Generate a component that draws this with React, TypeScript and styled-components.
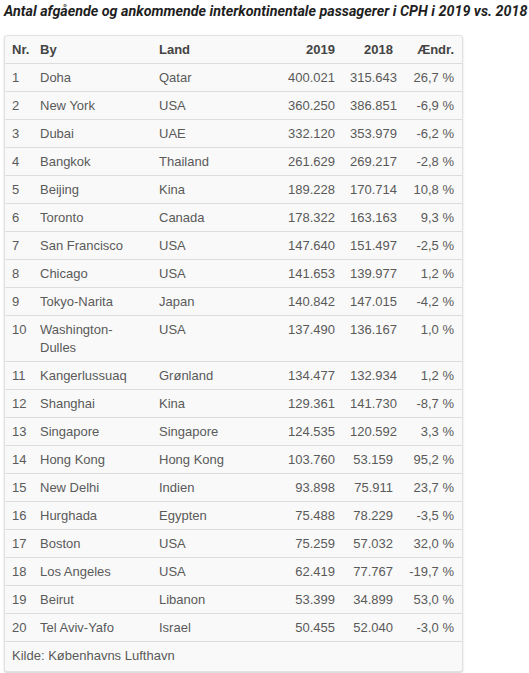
import React from "react";
import styled, { createGlobalStyle } from "styled-components";

interface Row {
	nr: number;
	city: string;
	country: string;
	y2019: string;
	y2018: string;
	change: string;
}

const rows: Row[] = [
	{ nr: 1, city: "Doha", country: "Qatar", y2019: "400.021", y2018: "315.643", change: "26,7 %" },
	{ nr: 2, city: "New York", country: "USA", y2019: "360.250", y2018: "386.851", change: "-6,9 %" },
	{ nr: 3, city: "Dubai", country: "UAE", y2019: "332.120", y2018: "353.979", change: "-6,2 %" },
	{ nr: 4, city: "Bangkok", country: "Thailand", y2019: "261.629", y2018: "269.217", change: "-2,8 %" },
	{ nr: 5, city: "Beijing", country: "Kina", y2019: "189.228", y2018: "170.714", change: "10,8 %" },
	{ nr: 6, city: "Toronto", country: "Canada", y2019: "178.322", y2018: "163.163", change: "9,3 %" },
	{ nr: 7, city: "San Francisco", country: "USA", y2019: "147.640", y2018: "151.497", change: "-2,5 %" },
	{ nr: 8, city: "Chicago", country: "USA", y2019: "141.653", y2018: "139.977", change: "1,2 %" },
	{ nr: 9, city: "Tokyo-Narita", country: "Japan", y2019: "140.842", y2018: "147.015", change: "-4,2 %" },
	{ nr: 10, city: "Washington-Dulles", country: "USA", y2019: "137.490", y2018: "136.167", change: "1,0 %" },
	{ nr: 11, city: "Kangerlussuaq", country: "Grønland", y2019: "134.477", y2018: "132.934", change: "1,2 %" },
	{ nr: 12, city: "Shanghai", country: "Kina", y2019: "129.361", y2018: "141.730", change: "-8,7 %" },
	{ nr: 13, city: "Singapore", country: "Singapore", y2019: "124.535", y2018: "120.592", change: "3,3 %" },
	{ nr: 14, city: "Hong Kong", country: "Hong Kong", y2019: "103.760", y2018: "53.159", change: "95,2 %" },
	{ nr: 15, city: "New Delhi", country: "Indien", y2019: "93.898", y2018: "75.911", change: "23,7 %" },
	{ nr: 16, city: "Hurghada", country: "Egypten", y2019: "75.488", y2018: "78.229", change: "-3,5 %" },
	{ nr: 17, city: "Boston", country: "USA", y2019: "75.259", y2018: "57.032", change: "32,0 %" },
	{ nr: 18, city: "Los Angeles", country: "USA", y2019: "62.419", y2018: "77.767", change: "-19,7 %" },
	{ nr: 19, city: "Beirut", country: "Libanon", y2019: "53.399", y2018: "34.899", change: "53,0 %" },
	{ nr: 20, city: "Tel Aviv-Yafo", country: "Israel", y2019: "50.455", y2018: "52.040", change: "-3,0 %" },
];

const App = () => {
	return (
		<>
			<GlobalStyle />
			<Page>
				<Title>Antal afgående og ankommende interkontinentale passagerer i CPH i 2019 vs. 2018</Title>
				<Card>
					<Table>
						<colgroup>
							<col style={{ width: 28 }} />
							<col style={{ width: 119 }} />
							<col style={{ width: 110 }} />
							<col style={{ width: 81 }} />
							<col style={{ width: 58 }} />
							<col style={{ width: 61 }} />
						</colgroup>
						<thead>
							<tr>
								<Th>Nr.</Th>
								<Th>By</Th>
								<Th>Land</Th>
								<Th $num>2019</Th>
								<Th $num>2018</Th>
								<Th $num>Ændr.</Th>
							</tr>
						</thead>
						<tbody>
							{rows.map((r) => (
								<tr key={r.nr}>
									<Td>{r.nr}</Td>
									<Td>{r.city}</Td>
									<Td>{r.country}</Td>
									<Td $num>{r.y2019}</Td>
									<Td $num>{r.y2018}</Td>
									<Td $num>{r.change}</Td>
								</tr>
							))}
						</tbody>
					</Table>
					<Source>Kilde: Københavns Lufthavn</Source>
				</Card>
			</Page>
		</>
	);
};

const GlobalStyle = createGlobalStyle`
	body {
		margin: 0;
		background: #ffffff;
	}
`;

const Page = styled.div`
	padding: 2px 4px;
	font-family: "Liberation Sans", Arial, sans-serif;
`;

const Title = styled.h2`
	margin: 0 0 15px 0;
	font-family: Roboto, "Liberation Sans", sans-serif;
	font-style: italic;
	font-weight: 700;
	font-size: 14.3px;
	line-height: 18px;
	color: #1f1f1f;
	white-space: nowrap;
`;

const Card = styled.div`
	width: 457px;
	background: #f9f9f9;
	border: 1px solid #e2e2e2;
	border-radius: 3px;
	box-shadow: 0 1px 2px rgba(0, 0, 0, 0.18);
`;

const Table = styled.table`
	width: 457px;
	table-layout: fixed;
	border-collapse: collapse;
	font-size: 13px;
	line-height: 18px;
	color: #5a5a5a;
`;

const Th = styled.th<{ $num?: boolean }>`
	padding: 5px 8px 4px 7px;
	text-align: ${({ $num }) => ($num ? "right" : "left")};
	font-weight: 700;
	color: #444444;
	border-bottom: 1px solid #dddddd;
`;

const Td = styled.td<{ $num?: boolean }>`
	padding: 5px 8px 4px 7px;
	vertical-align: top;
	text-align: ${({ $num }) => ($num ? "right" : "left")};
	border-bottom: 1px solid #dddddd;
`;

const Source = styled.div`
	padding: 5px 7px 6px;
	font-size: 13px;
	line-height: 18px;
	color: #5a5a5a;
`;

export default App;
